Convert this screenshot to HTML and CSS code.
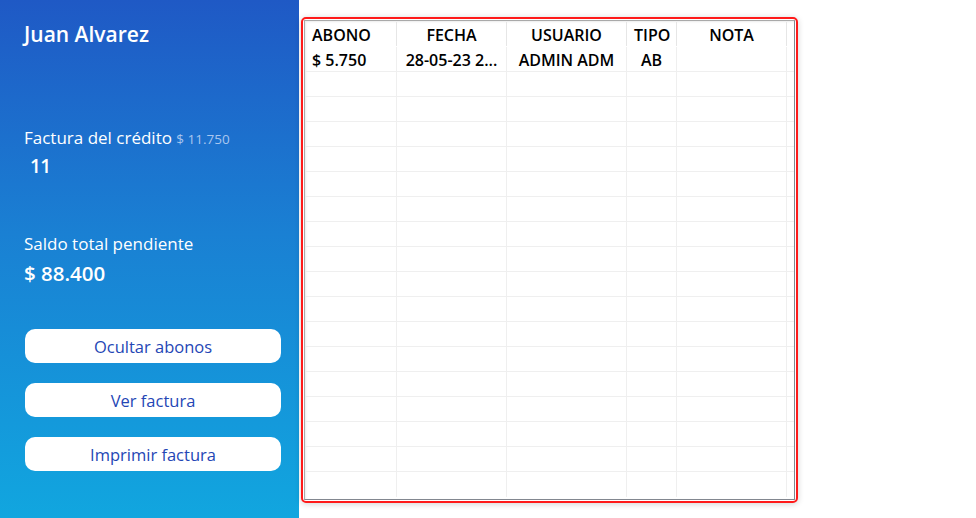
FILE: index.html
```html
<!DOCTYPE html>
<html lang="es">
<head>
<meta charset="utf-8">
<title>Abonos</title>
<link rel="stylesheet" href="styles.css">
</head>
<body>
<div class="app">
  <aside class="side">
    <h1 class="name">Juan Alvarez</h1>
    <div class="block block-factura">
      <div class="label">Factura del crédito <span class="small">$ 11.750</span></div>
      <div class="num">11</div>
    </div>
    <div class="block block-saldo">
      <div class="label">Saldo total pendiente</div>
      <div class="amount">$ 88.400</div>
    </div>
    <div class="buttons">
      <button class="btn">Ocultar abonos</button>
      <button class="btn">Ver factura</button>
      <button class="btn">Imprimir factura</button>
    </div>
  </aside>
  <main class="main">
    <div class="frame">
      <div class="grid">
        <div class="row head">
          <div class="cell left">ABONO</div>
          <div class="cell">FECHA</div>
          <div class="cell">USUARIO</div>
          <div class="cell">TIPO</div>
          <div class="cell">NOTA</div>
          <div class="cell fill"></div>
        </div>
        <div class="row data first">
          <div class="cell left">$ 5.750</div>
          <div class="cell">28-05-23 2...</div>
          <div class="cell">ADMIN ADM</div>
          <div class="cell">AB</div>
          <div class="cell"></div>
          <div class="cell fill"></div>
        </div>
        <div class="row data"><div class="cell"></div><div class="cell"></div><div class="cell"></div><div class="cell"></div><div class="cell"></div><div class="cell fill"></div></div>
        <div class="row data"><div class="cell"></div><div class="cell"></div><div class="cell"></div><div class="cell"></div><div class="cell"></div><div class="cell fill"></div></div>
        <div class="row data"><div class="cell"></div><div class="cell"></div><div class="cell"></div><div class="cell"></div><div class="cell"></div><div class="cell fill"></div></div>
        <div class="row data"><div class="cell"></div><div class="cell"></div><div class="cell"></div><div class="cell"></div><div class="cell"></div><div class="cell fill"></div></div>
        <div class="row data"><div class="cell"></div><div class="cell"></div><div class="cell"></div><div class="cell"></div><div class="cell"></div><div class="cell fill"></div></div>
        <div class="row data"><div class="cell"></div><div class="cell"></div><div class="cell"></div><div class="cell"></div><div class="cell"></div><div class="cell fill"></div></div>
        <div class="row data"><div class="cell"></div><div class="cell"></div><div class="cell"></div><div class="cell"></div><div class="cell"></div><div class="cell fill"></div></div>
        <div class="row data"><div class="cell"></div><div class="cell"></div><div class="cell"></div><div class="cell"></div><div class="cell"></div><div class="cell fill"></div></div>
        <div class="row data"><div class="cell"></div><div class="cell"></div><div class="cell"></div><div class="cell"></div><div class="cell"></div><div class="cell fill"></div></div>
        <div class="row data"><div class="cell"></div><div class="cell"></div><div class="cell"></div><div class="cell"></div><div class="cell"></div><div class="cell fill"></div></div>
        <div class="row data"><div class="cell"></div><div class="cell"></div><div class="cell"></div><div class="cell"></div><div class="cell"></div><div class="cell fill"></div></div>
        <div class="row data"><div class="cell"></div><div class="cell"></div><div class="cell"></div><div class="cell"></div><div class="cell"></div><div class="cell fill"></div></div>
        <div class="row data"><div class="cell"></div><div class="cell"></div><div class="cell"></div><div class="cell"></div><div class="cell"></div><div class="cell fill"></div></div>
        <div class="row data"><div class="cell"></div><div class="cell"></div><div class="cell"></div><div class="cell"></div><div class="cell"></div><div class="cell fill"></div></div>
        <div class="row data"><div class="cell"></div><div class="cell"></div><div class="cell"></div><div class="cell"></div><div class="cell"></div><div class="cell fill"></div></div>
        <div class="row data"><div class="cell"></div><div class="cell"></div><div class="cell"></div><div class="cell"></div><div class="cell"></div><div class="cell fill"></div></div>
        <div class="row data last"><div class="cell"></div><div class="cell"></div><div class="cell"></div><div class="cell"></div><div class="cell"></div><div class="cell fill"></div></div>
      </div>
    </div>
  </main>
</div>
</body>
</html>
```
FILE: styles.css
```css
* { box-sizing: border-box; }
html, body { margin: 0; padding: 0; }
body {
  width: 976px;
  height: 518px;
  overflow: hidden;
  background: #ffffff;
  font-family: "Open Sans", "Noto Sans", sans-serif;
}
.app {
  display: flex;
  height: 518px;
}
.side {
  width: 299px;
  flex: none;
  background: linear-gradient(180deg, #1f59c5 0%, #1a80d3 45%, #11a6df 100%);
  color: #ffffff;
  padding: 19px 18px 0 24px;
  display: flex;
  flex-direction: column;
}
.name {
  margin: 0;
  font-size: 21px;
  font-weight: 600;
  line-height: 30px;
  letter-spacing: 0;
}
.block-factura { margin-top: 77px; }
.label {
  font-size: 17px;
  line-height: 24px;
  font-weight: 400;
  letter-spacing: 0;
}
.small {
  font-size: 13.5px;
  color: #a9c6ef;
  letter-spacing: 0;
}
.num {
  margin-top: 2px;
  padding-left: 6px;
  font-size: 19px;
  font-weight: 600;
  line-height: 26px;
  letter-spacing: -0.5px;
}
.block-saldo { margin-top: 53px; }
.amount {
  margin-top: 3px;
  font-size: 20.5px;
  font-weight: 600;
  line-height: 28px;
}
.buttons {
  margin-top: 42px;
  margin-left: 1px;
  display: flex;
  flex-direction: column;
  gap: 20px;
}
.btn {
  width: 256px;
  height: 34px;
  border: none;
  border-radius: 10px;
  background: #ffffff;
  color: #2446b5;
  font-family: "Open Sans", "Noto Sans", sans-serif;
  font-size: 16.5px;
  font-weight: 500;
  letter-spacing: 0;
  padding: 0;
  cursor: pointer;
}
.main {
  flex: 1;
  padding: 17px 0 0 2px;
}
.frame {
  width: 497px;
  height: 486px;
  border: 2px solid #ff1a1a;
  border-radius: 5px;
  padding: 1px;
  box-shadow: 0 1px 6px rgba(0, 0, 0, 0.18);
  background: #ffffff;
}
.grid {
  height: 100%;
  border: 1px solid #828790;
  border-top-color: #a9a9a9;
  border-left-color: #a9a9a9;
  display: flex;
  flex-direction: column;
  overflow: hidden;
  box-shadow: inset 1px 1px 2px rgba(0,0,0,0.08);
}
.row {
  display: grid;
  grid-template-columns: 92px 110px 120px 50px 110px 1fr;
  flex: none;
}
.head {
  height: 26px;
}
.head .cell {
  border-right: 1px solid #e6e6e6;
  margin: 1px 0 1px 0;
  text-align: center;
  line-height: 26px;
}
.head .cell.left { text-align: left; }
.head .cell.fill { border-right: none; }
.data {
  height: 25px;
  border-bottom: 1px solid #efefef;
}
.data.last { border-bottom: none; }
.data .cell {
  border-right: 1px solid #efefef;
  text-align: center;
}
.data .cell.left { text-align: left; }
.data .cell.fill { border-right: none; }
.cell {
  font-size: 16px;
  font-weight: 600;
  color: #000000;
  line-height: 24px;
  padding: 0 7px;
  white-space: nowrap;
  overflow: hidden;
  letter-spacing: 0;
}
.first .cell { line-height: 26px; }
```
